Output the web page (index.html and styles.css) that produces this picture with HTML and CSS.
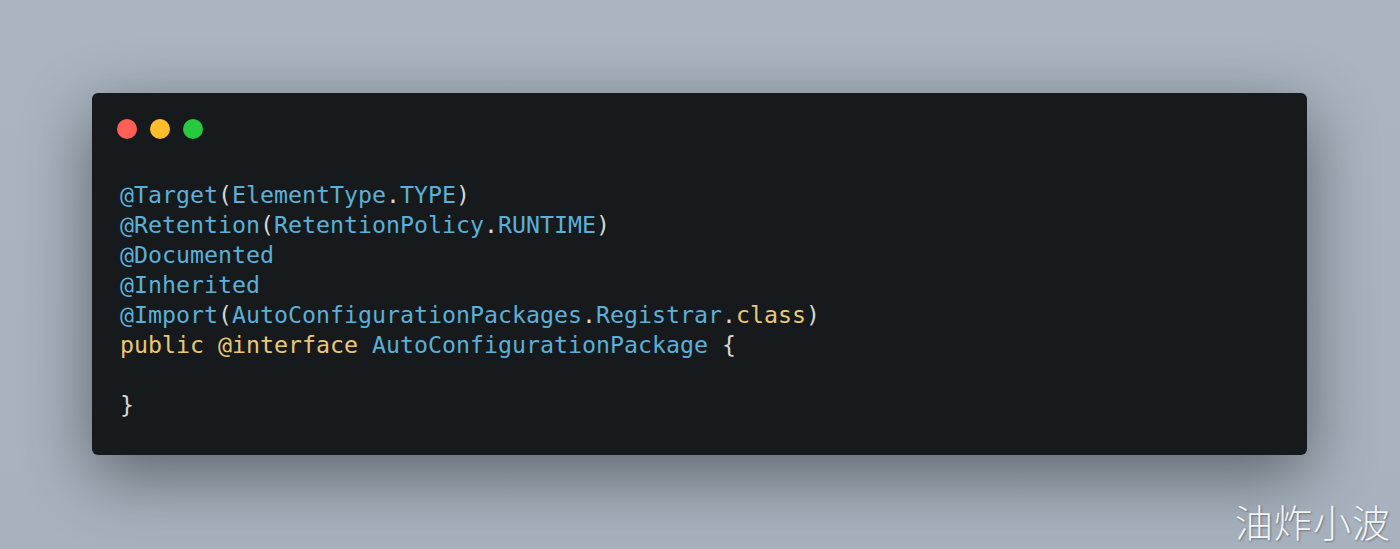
FILE: index.html
```html
<!DOCTYPE html>
<html>
<head>
<meta charset="utf-8">
<link rel="stylesheet" href="styles.css">
</head>
<body>
<div class="stage">
  <div class="window">
    <div class="controls">
      <span class="dot red"></span>
      <span class="dot yellow"></span>
      <span class="dot green"></span>
    </div>
<pre class="code"><span class="a">@Target</span><span class="p">(</span><span class="a">ElementType</span><span class="p">.</span><span class="a">TYPE</span><span class="p">)</span>
<span class="a">@Retention</span><span class="p">(</span><span class="a">RetentionPolicy</span><span class="p">.</span><span class="a">RUNTIME</span><span class="p">)</span>
<span class="a">@Documented</span>
<span class="a">@Inherited</span>
<span class="a">@Import</span><span class="p">(</span><span class="a">AutoConfigurationPackages</span><span class="p">.</span><span class="a">Registrar</span><span class="p">.</span><span class="k">class</span><span class="p">)</span>
<span class="k">public</span> <span class="k">@interface</span> <span class="a">AutoConfigurationPackage</span> <span class="p">{</span>

<span class="p">}</span></pre>
  </div>
  <div class="watermark">油炸小波</div>
</div>
</body>
</html>
```
FILE: styles.css
```css
html, body {
  margin: 0;
  padding: 0;
}
body {
  width: 1400px;
  height: 549px;
  overflow: hidden;
  background: linear-gradient(180deg, #aab5c1 0%, #a7b2be 100%);
}
.stage {
  position: relative;
  width: 1400px;
  height: 549px;
  padding-top: 93px;
  box-sizing: border-box;
}
.window {
  margin-left: 92px;
  width: 1215px;
  height: 362px;
  box-sizing: border-box;
  background: #171a1d;
  border-radius: 6px;
  box-shadow: 0 20px 68px rgba(0, 0, 0, 0.45);
  padding: 26px 28px 0 28px;
}
.controls {
  display: flex;
  gap: 13px;
  margin-left: -3px;
  height: 20px;
}
.dot {
  width: 20px;
  height: 20px;
  border-radius: 50%;
}
.red { background: #ff5f56; }
.yellow { background: #ffbd2e; }
.green { background: #27c93f; }
.code {
  margin: 41px 0 0 0;
  font-family: "DejaVu Sans Mono", monospace;
  font-size: 23.25px;
  line-height: 30px;
  color: #d4d4d4;
}
.a { color: #5ab0d8; }
.p { color: #d6d6d6; }
.k { color: #eac974; }
.watermark {
  position: absolute;
  right: 9px;
  bottom: 6px;
  font-family: "Noto Sans CJK SC", sans-serif;
  font-weight: 300;
  font-size: 38px;
  line-height: 44px;
  letter-spacing: 1px;
  color: #f2f4f6;
  text-shadow: 1px 1px 2px rgba(0, 0, 0, 0.35);
}
```
